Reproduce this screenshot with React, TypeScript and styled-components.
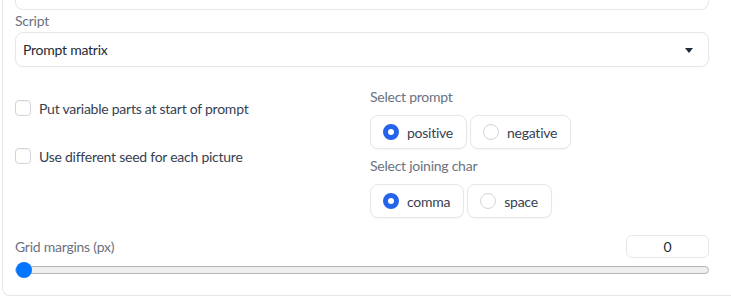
import React, { FC, useState } from 'react';
import styled, { createGlobalStyle } from 'styled-components';

/* ---------- STYLES ---------- */

const GlobalStyle = createGlobalStyle`
    html, body {
        margin: 0;
        padding: 0;
        background: #ffffff;
        overflow: hidden;
    }
    body {
        font-family: Lato, "Noto Sans", sans-serif;
        font-size: 14px;
        letter-spacing: -0.25px;
        color: #1f2937;
    }
`;

const SPanel = styled.div`
    margin-left: 2px;
    width: 694px;
    padding: 0 22px 17px 12px;
    border: 1px solid #e5e7eb;
    border-top: none;
    border-right: none;
    border-radius: 0 0 0 8px;
    display: flex;
    flex-direction: column;
`;

const STopBox = styled.div`
    height: 9px;
    border: 1px solid #e5e7eb;
    border-top: none;
    border-radius: 0 0 8px 8px;
`;

const SField = styled.div`
    display: flex;
    flex-direction: column;
    margin-top: 1px;
`;

const SLabel = styled.span<{ $spacing?: number }>`
    display: block;
    height: 20px;
    line-height: 20px;
    color: #6b7280;
    margin-bottom: ${(p) => p.$spacing ?? 0}px;
`;

const SDropdown = styled.div`
    height: 35px;
    box-sizing: border-box;
    border: 1px solid #e5e7eb;
    border-radius: 8px;
    padding: 0 15px 0 7px;
    display: flex;
    align-items: center;
    justify-content: space-between;
    color: #1f2937;
    box-shadow: 0 1px 2px rgba(0, 0, 0, 0.03);
`;

const SCaret = styled.span`
    width: 0;
    height: 0;
    border-left: 4px solid transparent;
    border-right: 4px solid transparent;
    border-top: 5px solid #1f2937;
    margin-top: 1px;
`;

const SColumns = styled.div`
    display: grid;
    grid-template-columns: 1fr 1fr;
    column-gap: 16px;
    margin-top: 20px;
`;

const SChecks = styled.div`
    display: flex;
    flex-direction: column;
    gap: 28px;
    padding-top: 11px;
`;

const SCheckRow = styled.label`
    display: flex;
    align-items: center;
    gap: 8px;
    height: 20px;
    color: #374151;
    cursor: pointer;
`;

const SCheckBox = styled.span`
    width: 16px;
    height: 16px;
    box-sizing: border-box;
    border: 1px solid #d1d5db;
    border-radius: 4px;
    background: #ffffff;
    box-shadow: inset 0 1px 1px rgba(0, 0, 0, 0.04);
`;

const SOptions = styled.div`
    display: flex;
    flex-direction: column;
`;

const SRadioGroup = styled.div<{ $last?: boolean }>`
    display: flex;
    gap: 3px;
    margin-bottom: ${(p) => (p.$last ? 0 : 7)}px;
`;

const SRadioOption = styled.label`
    height: 34px;
    box-sizing: border-box;
    display: flex;
    align-items: center;
    gap: 8px;
    padding: 0 13px 0 12px;
    border: 1px solid #e5e7eb;
    border-radius: 8px;
    background: #ffffff;
    color: #374151;
    box-shadow: 0 1px 2px rgba(0, 0, 0, 0.04);
    cursor: pointer;
`;

const SRadioDot = styled.span<{ $checked: boolean }>`
    width: 16px;
    height: 16px;
    box-sizing: border-box;
    border-radius: 50%;
    border: ${(p) => (p.$checked ? '5px solid #2563eb' : '1px solid #d1d5db')};
    background: #ffffff;
`;

const SSliderHead = styled.div`
    display: flex;
    align-items: center;
    justify-content: space-between;
    margin-top: 17px;
`;

const SNumber = styled.div`
    width: 83px;
    height: 23px;
    box-sizing: border-box;
    border: 1px solid #e5e7eb;
    border-radius: 6px;
    display: flex;
    align-items: center;
    justify-content: center;
    color: #1f2937;
    font-size: 14px;
`;

const SRange = styled.input`
    -webkit-appearance: none;
    appearance: none;
    width: 100%;
    height: 16px;
    margin: 4px 0 0;
    background: transparent;

    &::-webkit-slider-runnable-track {
        height: 8px;
        box-sizing: border-box;
        border: 1px solid #b5b5b5;
        border-radius: 4px;
        background: #efefef;
    }

    &::-webkit-slider-thumb {
        -webkit-appearance: none;
        width: 16px;
        height: 16px;
        border-radius: 50%;
        background: #0075ff;
        border: none;
        margin-top: -5px;
    }
`;

/* ---------- COMPONENT ---------- */

interface RadioFieldProps {
    label: string;
    options: string[];
    value: string;
    onChange: (v: string) => void;
    last?: boolean;
}

const RadioField: FC<RadioFieldProps> = ({ label, options, value, onChange, last }) => (
    <>
        <SLabel $spacing={8}>{label}</SLabel>
        <SRadioGroup $last={last}>
            {options.map((opt) => (
                <SRadioOption key={opt} onClick={() => onChange(opt)}>
                    <SRadioDot $checked={opt === value} />
                    {opt}
                </SRadioOption>
            ))}
        </SRadioGroup>
    </>
);

const App: FC = () => {
    const [prompt, setPrompt] = useState('positive');
    const [joining, setJoining] = useState('comma');
    const [margin, setMargin] = useState(0);

    return (
        <>
            <GlobalStyle />
            <SPanel>
                <STopBox />
                <SField>
                    <SLabel $spacing={1}>Script</SLabel>
                    <SDropdown>
                        Prompt matrix
                        <SCaret />
                    </SDropdown>
                </SField>
                <SColumns>
                    <SChecks>
                        <SCheckRow>
                            <SCheckBox />
                            Put variable parts at start of prompt
                        </SCheckRow>
                        <SCheckRow>
                            <SCheckBox />
                            Use different seed for each picture
                        </SCheckRow>
                    </SChecks>
                    <SOptions>
                        <RadioField
                            label="Select prompt"
                            options={['positive', 'negative']}
                            value={prompt}
                            onChange={setPrompt}
                        />
                        <RadioField
                            label="Select joining char"
                            options={['comma', 'space']}
                            value={joining}
                            onChange={setJoining}
                            last
                        />
                    </SOptions>
                </SColumns>
                <SSliderHead>
                    <SLabel>Grid margins (px)</SLabel>
                    <SNumber>{margin}</SNumber>
                </SSliderHead>
                <SRange
                    type="range"
                    min={0}
                    max={500}
                    value={margin}
                    onChange={(e) => setMargin(Number(e.target.value))}
                />
            </SPanel>
        </>
    );
};

export default App;
